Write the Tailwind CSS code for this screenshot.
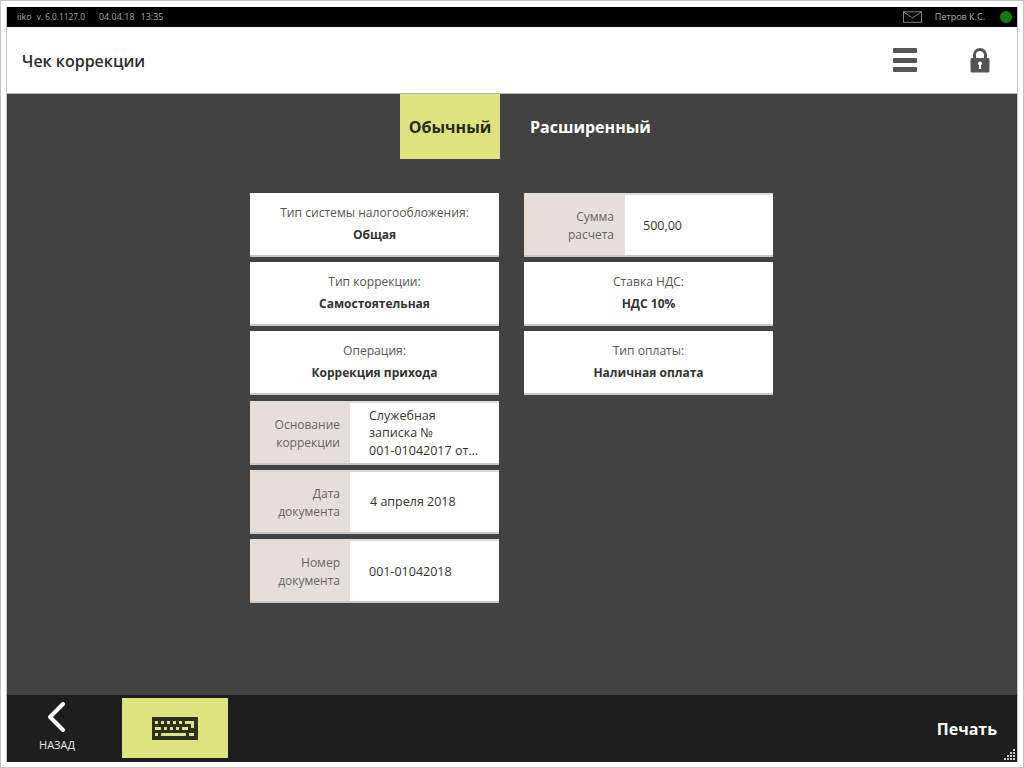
<!DOCTYPE html>
<html lang="ru">
<head>
<meta charset="UTF-8">
<title>Чек коррекции</title>
<script src="https://cdn.jsdelivr.net/npm/@tailwindcss/browser@4"></script>
</head>
<body class="w-[1024px] h-[768px] overflow-hidden bg-white font-['Open_Sans',sans-serif]">
  <div class="w-[1024px] h-[768px] pt-[6px] px-[5px] border border-[#c4c4c4]">
    <div class="w-[1012px] h-[755px] flex flex-col border-x border-[#c4c4c4]">

      <!-- status bar -->
      <div class="h-[20px] bg-black flex items-center pl-[10px] pr-[5px] text-[9px] text-[#a8a8a8]">
        <span>iiko</span>
        <span class="ml-[5px] text-[8.3px]">v. 6.0.1127.0</span>
        <span class="ml-[14px]">04.04.18</span>
        <span class="ml-[6px]">13:35</span>
        <svg class="ml-auto" width="19" height="13" viewBox="0 0 20 13" fill="none" stroke="#8a8a8a" stroke-width="1"><rect x="0.5" y="0.5" width="19" height="11"/><path d="M0.5 0.5 10 7l9.5-6.5"/></svg>
        <span class="ml-[13px] text-[#b0b0b0]">Петров К.С.</span>
        <span class="ml-[15px] w-[12px] h-[12px] rounded-full bg-[#107c10]"></span>
      </div>

      <!-- header -->
      <div class="h-[67px] bg-white border-b border-[#b5b5b5] flex items-center pl-[15px]">
        <h1 class="pt-[2px] text-[16px] font-semibold text-[#2b2b2b]">Чек коррекции</h1>
        <div class="ml-auto flex flex-col gap-[4.5px] mr-[53px]">
          <span class="block w-[24px] h-[5px] rounded-[1px] bg-[#555]"></span>
          <span class="block w-[24px] h-[5px] rounded-[1px] bg-[#555]"></span>
          <span class="block w-[24px] h-[5px] rounded-[1px] bg-[#555]"></span>
        </div>
        <svg class="mr-[27px]" width="20" height="25" viewBox="0 0 20 25"><path d="M4.5 11V7a5.5 5.5 0 0 1 11 0v4" fill="none" stroke="#555" stroke-width="3"/><rect x="0.5" y="10" width="19" height="14.5" rx="1.5" fill="#555"/><circle cx="10" cy="15.5" r="2" fill="#fff"/><rect x="9" y="16" width="2" height="5" fill="#fff"/></svg>
      </div>

      <!-- main -->
      <div class="flex-1 bg-[#414241] flex flex-col pl-[243px]">
        <div class="flex h-[65px] w-[523px] pl-[150px]">
          <button class="w-[100px] h-[65px] pt-[1px] bg-[#dfe37f] text-[#262b1e] text-[16px] font-bold">Обычный</button>
          <button class="ml-[30px] h-[65px] pt-[1px] text-white text-[16px] font-bold">Расширенный</button>
        </div>

        <div class="mt-[34px] flex gap-[25px] items-start w-[523px]">
          <div class="w-[249px] flex flex-col gap-[5.2px]">
            <div class="h-[64px] bg-white border-b-2 border-[#c9c9c9] flex flex-col items-center justify-center gap-[4px]">
              <span class="text-[12.1px] text-[#555]">Тип системы налогообложения:</span>
              <span class="text-[12px] font-bold text-[#333]">Общая</span>
            </div>
            <div class="h-[64px] bg-white border-b-2 border-[#c9c9c9] flex flex-col items-center justify-center gap-[4px]">
              <span class="text-[12.1px] text-[#555]">Тип коррекции:</span>
              <span class="text-[12px] font-bold text-[#333]">Самостоятельная</span>
            </div>
            <div class="h-[64px] bg-white border-b-2 border-[#c9c9c9] flex flex-col items-center justify-center gap-[4px]">
              <span class="text-[12.1px] text-[#555]">Операция:</span>
              <span class="text-[12px] font-bold text-[#333]">Коррекция прихода</span>
            </div>
            <div class="h-[64px] bg-white border-y-2 border-t-[#dcdcdc] border-b-[#c9c9c9] flex text-[12.5px]">
              <div class="w-[100px] pt-[3px] bg-[#e8ded8] flex items-center justify-end text-right pr-[10px] text-[12px] leading-[18px] text-[#666]">Основание<br>коррекции</div>
              <div class="flex-1 pt-[1px] flex items-center pl-[19px] leading-[17.5px] text-[#333]">Служебная<br>записка №<br>001-01042017 от...</div>
            </div>
            <div class="h-[64px] bg-white border-y-2 border-t-[#dcdcdc] border-b-[#c9c9c9] flex text-[12.5px]">
              <div class="w-[100px] pt-[3px] bg-[#e8ded8] flex items-center justify-end text-right pr-[10px] text-[12px] leading-[18px] text-[#666]">Дата<br>документа</div>
              <div class="flex-1 pt-[1px] flex items-center pl-[20px] text-[#333]">4 апреля 2018</div>
            </div>
            <div class="h-[64px] bg-white border-y-2 border-t-[#dcdcdc] border-b-[#c9c9c9] flex text-[12.5px]">
              <div class="w-[100px] pt-[3px] bg-[#e8ded8] flex items-center justify-end text-right pr-[10px] text-[12px] leading-[18px] text-[#666]">Номер<br>документа</div>
              <div class="flex-1 pt-[3px] flex items-center pl-[19px] text-[#333]">001-01042018</div>
            </div>
          </div>

          <div class="w-[249px] flex flex-col gap-[5.2px]">
            <div class="h-[64px] bg-white border-y-2 border-t-[#dcdcdc] border-b-[#c9c9c9] flex text-[12.5px]">
              <div class="w-[101px] pt-[1px] bg-[#e8ded8] flex items-center justify-end text-right pr-[11px] text-[12px] leading-[18px] text-[#666]">Сумма<br>расчета</div>
              <div class="flex-1 pt-[3px] flex items-center pl-[18px] text-[#333]">500,00</div>
            </div>
            <div class="h-[64px] bg-white border-b-2 border-[#c9c9c9] flex flex-col items-center justify-center gap-[4px]">
              <span class="text-[12.1px] text-[#555]">Ставка НДС:</span>
              <span class="text-[12px] font-bold text-[#333]">НДС 10%</span>
            </div>
            <div class="h-[64px] bg-white border-b-2 border-[#c9c9c9] flex flex-col items-center justify-center gap-[4px]">
              <span class="text-[12.1px] text-[#555]">Тип оплаты:</span>
              <span class="text-[12px] font-bold text-[#333]">Наличная оплата</span>
            </div>
          </div>
        </div>
      </div>

      <!-- footer -->
      <div class="relative h-[67px] bg-[#1e1e1e] flex items-start">
        <div class="w-[100px] pt-[6px] flex flex-col items-center">
          <svg width="20" height="32" viewBox="0 0 20 32" fill="none" stroke="#fff" stroke-width="4" stroke-linecap="round" stroke-linejoin="round"><path d="M16 3 3 16l13 13"/></svg>
          <span class="mt-[4px] text-[11px] text-white/90">НАЗАД</span>
        </div>
        <div class="ml-[15px] mt-[3px] w-[106px] h-[60px] bg-[#dfe37f] flex items-center justify-center">
          <svg width="46" height="23" viewBox="0 0 46 23"><rect width="46" height="23" fill="#2f2f20"/><g fill="#dfe37f"><rect x="3" y="4" width="3" height="3"/><rect x="9" y="4" width="3" height="3"/><rect x="15" y="4" width="3" height="3"/><rect x="21" y="4" width="3" height="3"/><rect x="27" y="4" width="3" height="3"/><rect x="33" y="4" width="9" height="3"/><rect x="39" y="7" width="3" height="4"/><rect x="3" y="10" width="6" height="3"/><rect x="12" y="10" width="3" height="3"/><rect x="18" y="10" width="3" height="3"/><rect x="24" y="10" width="3" height="3"/><rect x="30" y="10" width="6" height="3"/><rect x="3" y="16" width="3" height="3"/><rect x="9" y="16" width="25" height="3"/><rect x="37" y="16" width="5" height="3"/></g></svg>
        </div>
        <span class="ml-auto mr-[20px] mt-[22px] text-[16px] font-bold text-white">Печать</span>
        <svg class="absolute right-[1px] bottom-[1px]" width="12" height="12" viewBox="0 0 12 12" fill="#c8c8c8"><rect x="9" y="0" width="2" height="2"/><rect x="6" y="3" width="2" height="2"/><rect x="9" y="3" width="2" height="2"/><rect x="3" y="6" width="2" height="2"/><rect x="6" y="6" width="2" height="2"/><rect x="9" y="6" width="2" height="2"/><rect x="0" y="9" width="2" height="2"/><rect x="3" y="9" width="2" height="2"/><rect x="6" y="9" width="2" height="2"/><rect x="9" y="9" width="2" height="2"/></svg>
      </div>
    </div>
  </div>
</body>
</html>
